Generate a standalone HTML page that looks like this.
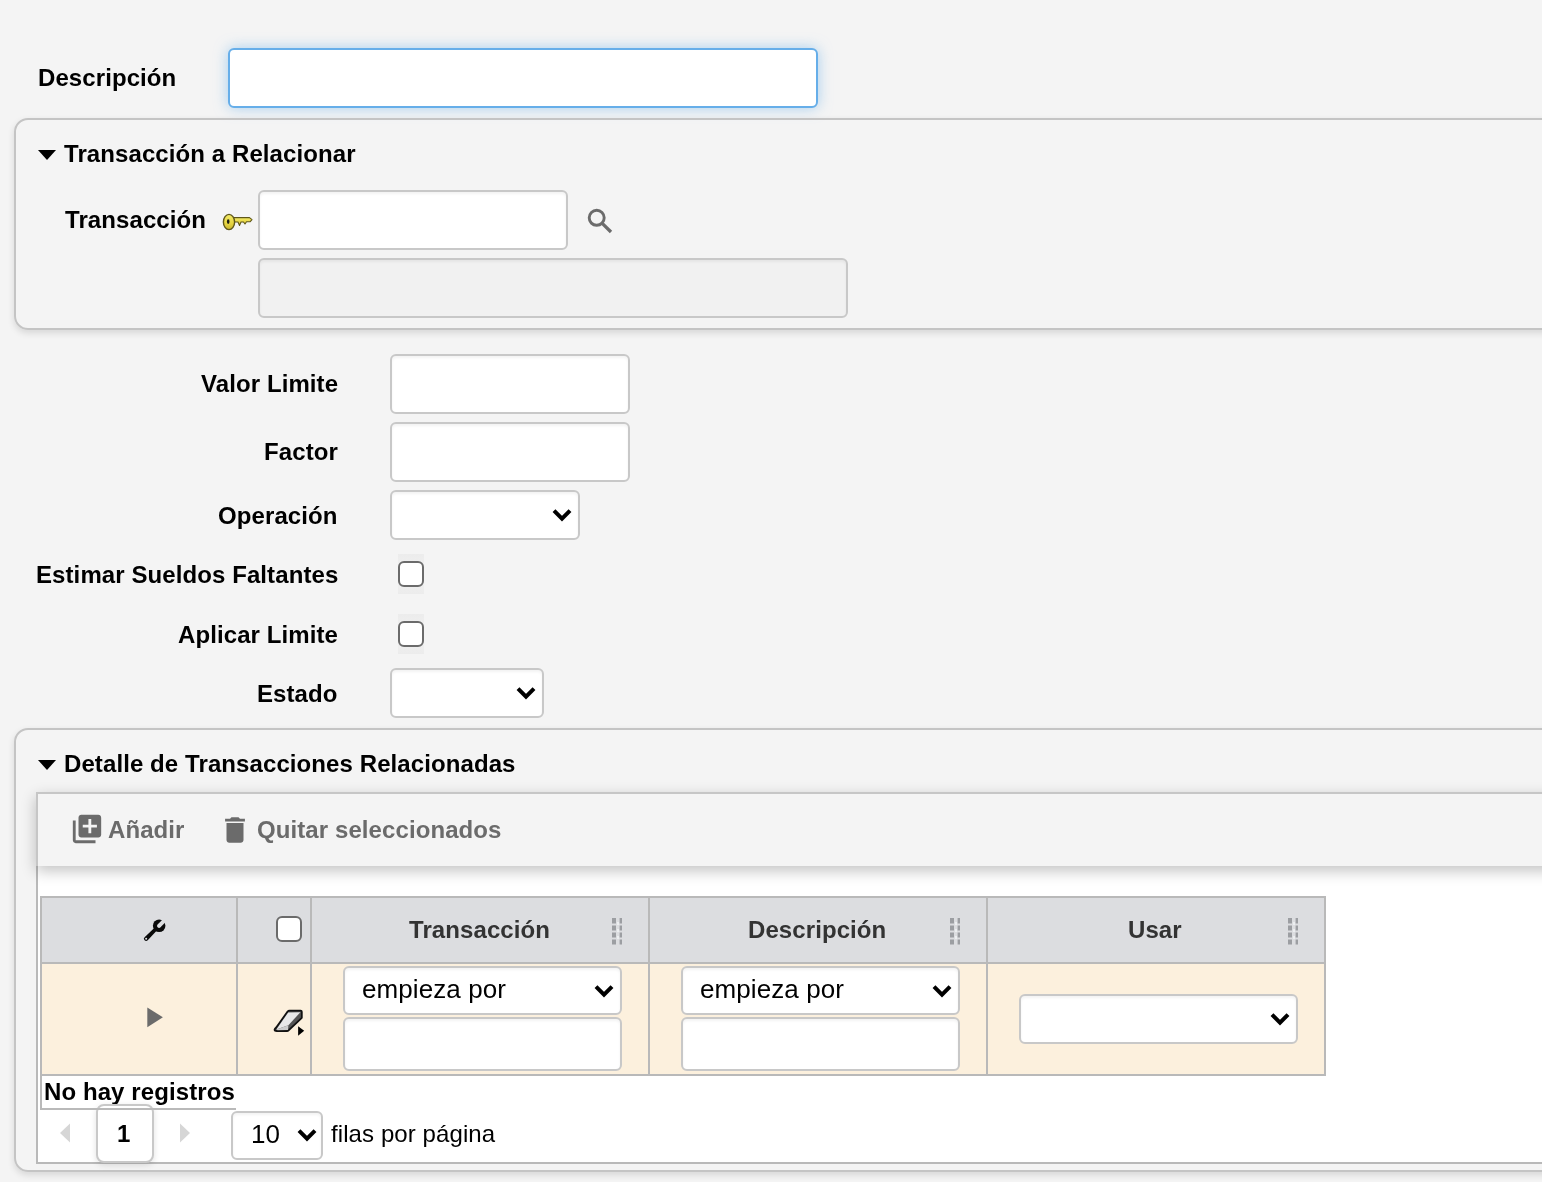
<!DOCTYPE html>
<html><head><meta charset="utf-8">
<style>
html,body{margin:0;padding:0;width:1542px;height:1182px;overflow:hidden;background:#f4f4f4;}
body{position:relative;font-family:"Liberation Sans",sans-serif;color:#000;}
.a{position:absolute;box-sizing:border-box;}
.t{position:absolute;will-change:transform;white-space:nowrap;letter-spacing:0.09px;font-size:24px;line-height:24px;font-weight:bold;}
.tr{text-align:right;}
.inp{position:absolute;box-sizing:border-box;background:#fff;border:2px solid #c8c8c8;border-radius:6px;box-shadow:inset 0 2px 3px rgba(0,0,0,0.05);}
.chev{position:absolute;}
.cb{position:absolute;box-sizing:border-box;width:26px;height:26px;border:2.5px solid #6b6b6b;border-radius:6px;background:#fff;}
.cbbg{position:absolute;width:26px;height:40px;background:linear-gradient(#ececec,#f0f0f0 40%,#f0f0f0 60%,#ececec);}
.fs{position:absolute;box-sizing:border-box;border:2px solid #c4c4c4;border-radius:14px;box-shadow:0 3px 7px rgba(0,0,0,0.12);}
.tri{position:absolute;width:0;height:0;border-left:9px solid transparent;border-right:9px solid transparent;border-top:10.5px solid #000;}
.hd{color:#333;}
.gray{color:#6b6b6b;}
.vl{position:absolute;width:2px;background:#b9b9b9;}
.hl{position:absolute;height:2px;background:#b9b9b9;}
</style></head>
<body>

<!-- Descripcion -->
<div class="t" style="left:38px;top:66px;">Descripción</div>
<div class="a" style="left:228px;top:48px;width:590px;height:60px;background:#fff;border:2px solid #66aee9;border-radius:6px;box-shadow:0 0 14px rgba(102,174,233,0.55);"></div>

<!-- Fieldset 1 -->
<div class="fs" style="left:14px;top:118px;width:1600px;height:212px;"></div>
<div class="tri" style="left:38px;top:150px;"></div>
<div class="t" style="left:64px;top:142px;">Transacción a Relacionar</div>
<div class="t" style="left:65px;top:208px;">Transacción</div>
<svg class="a" style="left:220px;top:210px;" width="36" height="24" viewBox="0 0 36 24">
  <defs><linearGradient id="kg" x1="0" y1="0" x2="0" y2="1"><stop offset="0" stop-color="#f4ec6a"/><stop offset="0.6" stop-color="#e6d440"/><stop offset="1" stop-color="#c9b52e"/></linearGradient></defs>
  <path d="M13 7.6 H29.5 L32 9.6 L30 11.8 H26.5 L25 14 L23.5 12 H21 L19.5 15.5 L18 12 H13 Z" fill="url(#kg)" stroke="#5f5718" stroke-width="1.1" stroke-linejoin="round"/>
  <ellipse cx="9" cy="12" rx="5.6" ry="7.6" fill="url(#kg)" stroke="#5f5718" stroke-width="1.4"/>
  <ellipse cx="8.2" cy="11.6" rx="1.3" ry="2.3" fill="#1a1a10"/>
</svg>
<div class="inp" style="left:258px;top:190px;width:310px;height:60px;"></div>
<svg class="a" style="left:585px;top:205px;" width="30" height="30" viewBox="0 0 30 30">
  <circle cx="11.7" cy="12.8" r="7.5" fill="none" stroke="#6b6b6b" stroke-width="2.9"/>
  <path d="M17.5 18.6 L26 27" stroke="#6b6b6b" stroke-width="3.3" stroke-linecap="butt"/>
</svg>
<div class="inp" style="left:258px;top:258px;width:590px;height:60px;background:#f1f1f1;"></div>

<!-- Form rows -->
<div class="t tr" style="right:1204px;top:372px;">Valor Limite</div>
<div class="inp" style="left:390px;top:354px;width:240px;height:60px;"></div>
<div class="t tr" style="right:1204px;top:440px;">Factor</div>
<div class="inp" style="left:390px;top:422px;width:240px;height:60px;"></div>
<div class="t tr" style="right:1204px;top:504px;">Operación</div>
<div class="inp" style="left:390px;top:490px;width:190px;height:50px;"></div>
<div class="t tr" style="right:1204px;top:563px;">Estimar Sueldos Faltantes</div>
<div class="cbbg" style="left:398px;top:554px;"></div>
<div class="cb" style="left:398px;top:561px;"></div>
<div class="t tr" style="right:1204px;top:623px;">Aplicar Limite</div>
<div class="cbbg" style="left:398px;top:614px;"></div>
<div class="cb" style="left:398px;top:621px;"></div>
<div class="t tr" style="right:1204px;top:682px;">Estado</div>
<div class="inp" style="left:390px;top:668px;width:154px;height:50px;"></div>

<!-- Fieldset 2 -->
<div class="fs" style="left:14px;top:728px;width:1600px;height:444px;"></div>
<div class="tri" style="left:38px;top:760px;"></div>
<div class="t" style="left:64px;top:752px;">Detalle de Transacciones Relacionadas</div>

<!-- Panel -->
<div class="a" style="left:36px;top:862px;width:1600px;height:302px;background:#fff;border:2px solid #b9b9b9;border-top:none;"></div>
<div class="a" style="left:36px;top:792px;width:1600px;height:74px;background:#f4f4f4;border:2px solid #c6c6c6;border-bottom:none;box-shadow:0 5px 14px rgba(0,0,0,0.24);"></div>
<svg class="a" style="left:70px;top:812px;" width="34" height="34" viewBox="0 0 24 24"><path fill="#6b6b6b" d="M4 6H2v14c0 1.1.9 2 2 2h14v-2H4V6zm16-4H8c-1.1 0-2 .9-2 2v12c0 1.1.9 2 2 2h12c1.1 0 2-.9 2-2V4c0-1.1-.9-2-2-2zm-1 9h-4v4h-2v-4H9V9h4V5h2v4h4v2z"/></svg>
<div class="t gray" style="left:108px;top:818px;">Añadir</div>
<svg class="a" style="left:218px;top:813px;" width="34" height="34" viewBox="0 0 24 24"><path fill="#6b6b6b" d="M6 19c0 1.1.9 2 2 2h8c1.1 0 2-.9 2-2V7H6v12zM19 4h-3.5l-1-1h-5l-1 1H5v2h14V4z"/></svg>
<div class="t gray" style="left:257px;top:818px;">Quitar seleccionados</div>

<!-- Table -->
<div class="a" style="left:40px;top:896px;width:1286px;height:68px;background:#dcdde0;border:2px solid #b9b9b9;border-bottom:2px solid #b9b9b9;"></div>
<div class="a" style="left:40px;top:962px;width:1286px;height:114px;background:#fcf0dd;border:2px solid #b9b9b9;"></div>
<div class="vl" style="left:236px;top:896px;height:180px;"></div>
<div class="vl" style="left:310px;top:896px;height:180px;"></div>
<div class="vl" style="left:648px;top:896px;height:180px;"></div>
<div class="vl" style="left:986px;top:896px;height:180px;"></div>

<svg class="a" style="left:140px;top:916px;" width="28" height="28" viewBox="0 0 28 28">
  <defs><mask id="wm"><rect x="0" y="0" width="28" height="28" fill="#fff"/><g transform="translate(18.8,9.6) rotate(45)"><rect x="-1.8" y="-9" width="3.6" height="9.4" fill="#000"/><circle cx="0" cy="0.4" r="1.8" fill="#000"/></g><circle cx="7" cy="21.4" r="0.9" fill="#000"/></mask></defs>
  <g transform="translate(14 15) scale(1.12) translate(-14 -14.5)"><g mask="url(#wm)" fill="#0a0a0a">
    <circle cx="18.6" cy="9.8" r="5.6"/>
    <path d="M5.6 20 L15.2 11 L17.4 13.2 L8.4 22.8 A1.9 1.9 0 0 1 5.6 20 Z"/>
  </g></g>
</svg>
<div class="cb" style="left:276px;top:916px;background:#fff;"></div>
<div class="t hd" style="left:409px;top:918px;">Transacción</div>
<div class="t hd" style="left:748px;top:918px;">Descripción</div>
<div class="t hd" style="left:1128px;top:918px;">Usar</div>

<svg class="a" style="left:612px;top:917px;" width="12" height="28" viewBox="0 0 12 28">
  <g fill="#9c9ea2"><rect x="0" y="1" width="4" height="5.5"/><rect x="7.6" y="1" width="2.4" height="5.5"/><rect x="0" y="8.5" width="4" height="5"/><rect x="7.6" y="8.5" width="2.4" height="5"/><rect x="0" y="15.5" width="4" height="5"/><rect x="7.6" y="15.5" width="2.4" height="5"/><rect x="0" y="22.5" width="4" height="5"/><rect x="7.6" y="22.5" width="2.4" height="5"/></g>
  <g fill="#eceef0"><rect x="5" y="5" width="2" height="3"/><rect x="5" y="12" width="2" height="3"/><rect x="5" y="19" width="2" height="3"/></g>
</svg>
<svg class="a" style="left:950px;top:917px;" width="12" height="28" viewBox="0 0 12 28">
  <g fill="#9c9ea2"><rect x="0" y="1" width="4" height="5.5"/><rect x="7.6" y="1" width="2.4" height="5.5"/><rect x="0" y="8.5" width="4" height="5"/><rect x="7.6" y="8.5" width="2.4" height="5"/><rect x="0" y="15.5" width="4" height="5"/><rect x="7.6" y="15.5" width="2.4" height="5"/><rect x="0" y="22.5" width="4" height="5"/><rect x="7.6" y="22.5" width="2.4" height="5"/></g>
  <g fill="#eceef0"><rect x="5" y="5" width="2" height="3"/><rect x="5" y="12" width="2" height="3"/><rect x="5" y="19" width="2" height="3"/></g>
</svg>
<svg class="a" style="left:1288px;top:917px;" width="12" height="28" viewBox="0 0 12 28">
  <g fill="#9c9ea2"><rect x="0" y="1" width="4" height="5.5"/><rect x="7.6" y="1" width="2.4" height="5.5"/><rect x="0" y="8.5" width="4" height="5"/><rect x="7.6" y="8.5" width="2.4" height="5"/><rect x="0" y="15.5" width="4" height="5"/><rect x="7.6" y="15.5" width="2.4" height="5"/><rect x="0" y="22.5" width="4" height="5"/><rect x="7.6" y="22.5" width="2.4" height="5"/></g>
  <g fill="#eceef0"><rect x="5" y="5" width="2" height="3"/><rect x="5" y="12" width="2" height="3"/><rect x="5" y="19" width="2" height="3"/></g>
</svg>
<svg class="a" style="left:146px;top:1007px;" width="18" height="22" viewBox="0 0 18 22"><path d="M1.3 0.4 L16.9 10.3 L1.3 20.3 Z" fill="#6b6b6b"/></svg>
<svg class="a" style="left:270px;top:1005px;" width="40" height="36" viewBox="0 0 40 36">
  <path d="M6.2 22.5 L17.6 6.6 Q18.2 5.6 19.5 5.6 L30.6 5.6 Q31.8 5.6 31.8 6.8 L31.8 12.8 L18.6 25.4 Q18 26 17 26 L6.8 26 Q4.4 26 4.6 24.6 Q4.9 23.6 6.2 22.5 Z" fill="#555" stroke="#111" stroke-width="1.8" stroke-linejoin="round"/>
  <path d="M6.4 24.6 L18.2 7.4 L30.4 7.2 L18.4 20.2 Z" fill="#e9e9e9"/>
  <path d="M6.4 24.6 L18.4 20.2 L18 25 L7.5 25.2 Z" fill="#cdcdcd"/>
  <path d="M28.1 21.3 L34.2 25.8 L28.1 30.8 Z" fill="#000"/>
</svg>

<div class="inp" style="left:343px;top:966px;width:279px;height:49px;"></div>
<div class="t" style="left:362px;top:977px;font-weight:normal;font-size:26px;">empieza por</div>
<div class="inp" style="left:343px;top:1017px;width:279px;height:54px;"></div>
<div class="inp" style="left:681px;top:966px;width:279px;height:49px;"></div>
<div class="t" style="left:700px;top:977px;font-weight:normal;font-size:26px;">empieza por</div>
<div class="inp" style="left:681px;top:1017px;width:279px;height:54px;"></div>
<div class="inp" style="left:1019px;top:994px;width:279px;height:50px;"></div>

<svg class="chev" style="left:552px;top:507.5px;" width="20" height="15" viewBox="0 0 20 15"><path d="M2 2.6 L10 10.6 L18 2.6" fill="none" stroke="#000" stroke-width="4"/></svg>
<svg class="chev" style="left:516px;top:685.5px;" width="20" height="15" viewBox="0 0 20 15"><path d="M2 2.6 L10 10.6 L18 2.6" fill="none" stroke="#000" stroke-width="4"/></svg>
<svg class="chev" style="left:594px;top:984px;" width="20" height="15" viewBox="0 0 20 15"><path d="M2 2.6 L10 10.6 L18 2.6" fill="none" stroke="#000" stroke-width="4"/></svg>
<svg class="chev" style="left:932px;top:984px;" width="20" height="15" viewBox="0 0 20 15"><path d="M2 2.6 L10 10.6 L18 2.6" fill="none" stroke="#000" stroke-width="4"/></svg>
<svg class="chev" style="left:1270px;top:1011.5px;" width="20" height="15" viewBox="0 0 20 15"><path d="M2 2.6 L10 10.6 L18 2.6" fill="none" stroke="#000" stroke-width="4"/></svg>
<!-- No hay registros -->
<div class="t" style="left:44px;top:1080px;">No hay registros</div>

<!-- Pager -->
<svg class="a" style="left:58px;top:1122px;" width="14" height="22" viewBox="0 0 14 22"><path d="M12 1.5 L2 11 L12 20.5 Z" fill="#d6d6d6"/></svg>
<div class="a" style="left:96px;top:1104px;width:58px;height:59px;background:#fff;border:2px solid #c8c8c8;border-radius:8px;box-shadow:0 2px 6px rgba(0,0,0,0.12);"></div>
<div class="vl" style="left:40px;top:1076px;height:34px;"></div>
<div class="hl" style="left:40px;top:1108px;width:196px;"></div>

<div class="t" style="left:117px;top:1122px;">1</div>
<svg class="a" style="left:178px;top:1122px;" width="14" height="22" viewBox="0 0 14 22"><path d="M2 1.5 L12 11 L2 20.5 Z" fill="#d6d6d6"/></svg>
<div class="inp" style="left:231px;top:1111px;width:92px;height:49px;"></div>
<div class="t" style="left:251px;top:1122px;font-weight:normal;font-size:26px;">10</div>
<svg class="chev" style="left:296.5px;top:1128px;" width="20" height="15" viewBox="0 0 20 15"><path d="M2 2.6 L10 10.6 L18 2.6" fill="none" stroke="#000" stroke-width="4"/></svg>
<div class="t" style="left:331px;top:1122px;font-weight:normal;">filas por página</div>

</body></html>
